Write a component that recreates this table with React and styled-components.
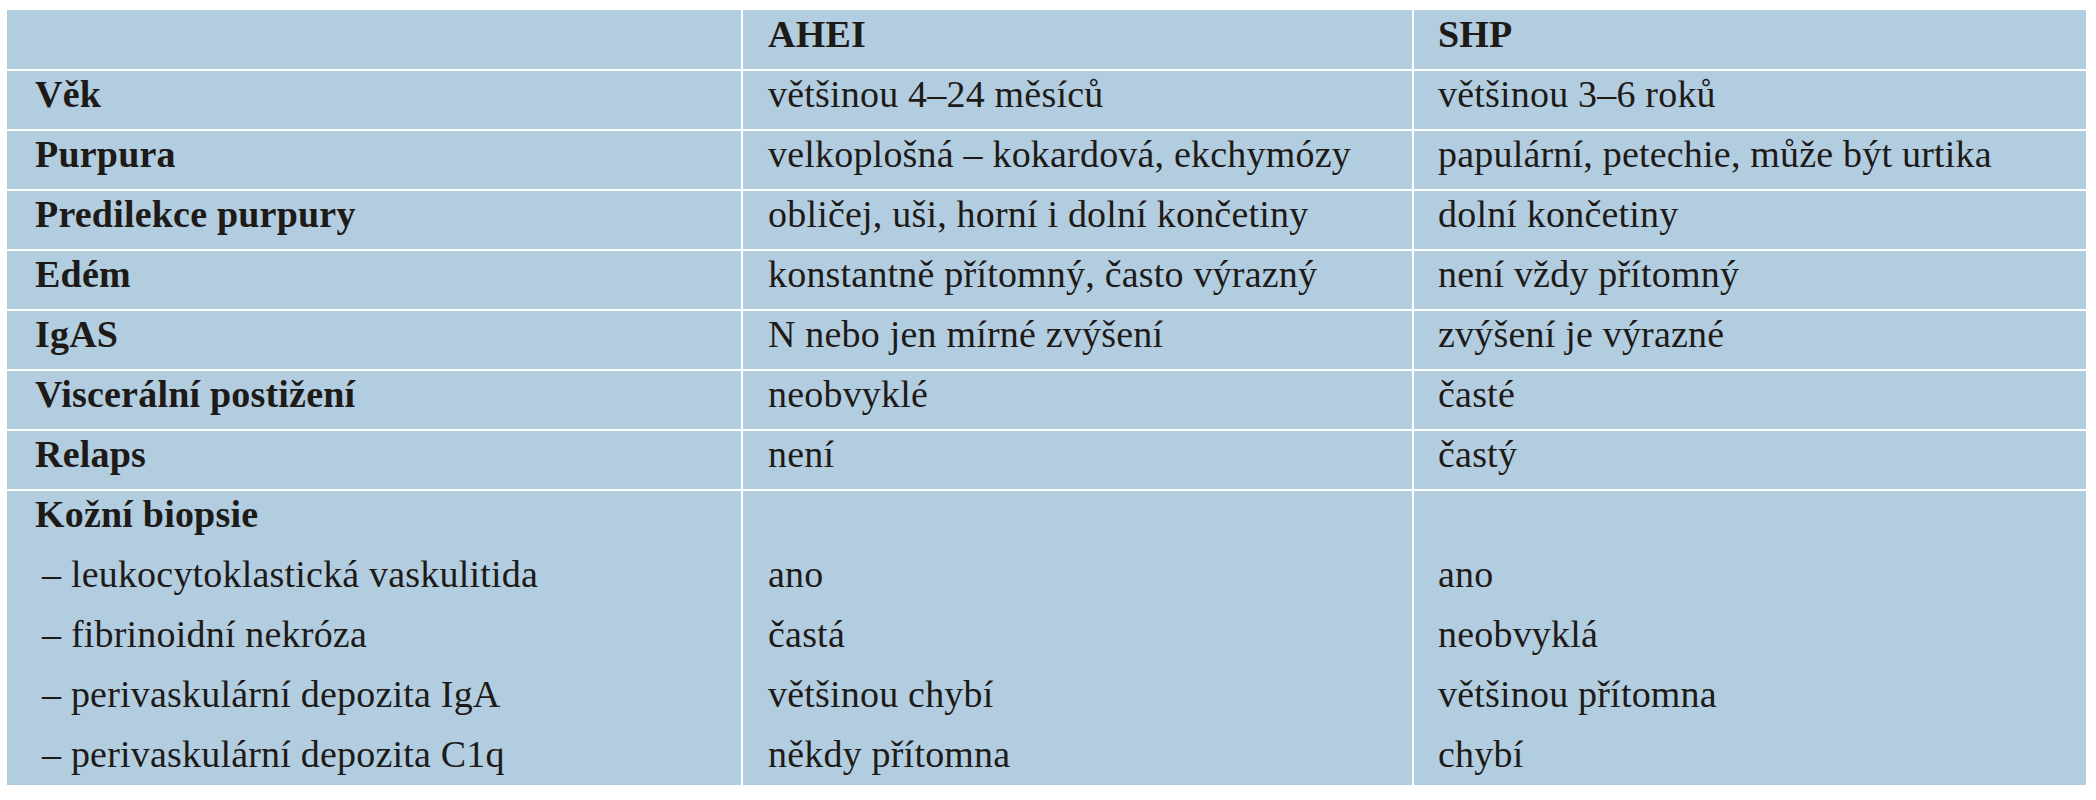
import React from "react";
import styled, { createGlobalStyle } from "styled-components";

const Global = createGlobalStyle`
  html, body { margin: 0; padding: 0; background: #ffffff; }
  body { font-family: "Liberation Serif", Tinos, "Times New Roman", Times, "DejaVu Serif", serif; }
`;

const Page = styled.div`
  padding: 10px 10px 0 7px;
`;

const Table = styled.div`
  display: grid;
  grid-template-columns: 734px 669px 672px;
  column-gap: 2px;
  row-gap: 2px;
  width: 2079px;
  color: #1e1a18;
  font-family: "Liberation Serif", Tinos, "Times New Roman", Times, "DejaVu Serif", serif;
  font-size: 38px;
  letter-spacing: 0.2px;
`;

const Cell = styled.div`
  background: #b1cddf;
  padding: ${(p) => (p.$head ? "1px" : "0")} 0 ${(p) => (p.$group ? "8px" : "12px")}
    ${(p) => p.$pad}px;
  font-weight: ${(p) => (p.$bold ? 700 : 400)};
  display: flex;
  flex-direction: column;
  row-gap: 14px;
`;

const Line = styled.div`
  line-height: 46px;
  height: 46px;
  white-space: nowrap;
  ${(p) => (p.$bold ? "font-weight: 700;" : "")}
  padding-left: ${(p) => (p.$indent ? 7 : 0)}px;
`;

const PADS = [28, 25, 24];

const rows = [
  ["Věk", "většinou 4–24 měsíců", "většinou 3–6 roků"],
  ["Purpura", "velkoplošná – kokardová, ekchymózy", "papulární, petechie, může být urtika"],
  ["Predilekce purpury", "obličej, uši, horní i dolní končetiny", "dolní končetiny"],
  ["Edém", "konstantně přítomný, často výrazný", "není vždy přítomný"],
  ["IgAS", "N nebo jen mírné zvýšení", "zvýšení je výrazné"],
  ["Viscerální postižení", "neobvyklé", "časté"],
  ["Relaps", "není", "častý"],
];

const biopsy = [
  ["– leukocytoklastická vaskulitida", "ano", "ano"],
  ["– fibrinoidní nekróza", "častá", "neobvyklá"],
  ["– perivaskulární depozita IgA", "většinou chybí", "většinou přítomna"],
  ["– perivaskulární depozita C1q", "někdy přítomna", "chybí"],
];

export default function App() {
  return (
    <>
      <Global />
      <Page>
        <Table>
          <Cell $head $bold $pad={PADS[0]}>
            <Line />
          </Cell>
          <Cell $head $bold $pad={PADS[1]}>
            <Line>AHEI</Line>
          </Cell>
          <Cell $head $bold $pad={PADS[2]}>
            <Line>SHP</Line>
          </Cell>
          {rows.map((r) =>
            r.map((t, i) => (
              <Cell key={r[0] + i} $bold={i === 0} $pad={PADS[i]}>
                <Line>{t}</Line>
              </Cell>
            ))
          )}
          {[0, 1, 2].map((col) => (
            <Cell key={"b" + col} $group $pad={PADS[col]}>
              <Line $bold={col === 0}>{col === 0 ? "Kožní biopsie" : ""}</Line>
              {biopsy.map((b) => (
                <Line key={b[0]} $indent={col === 0}>
                  {b[col]}
                </Line>
              ))}
            </Cell>
          ))}
        </Table>
      </Page>
    </>
  );
}
